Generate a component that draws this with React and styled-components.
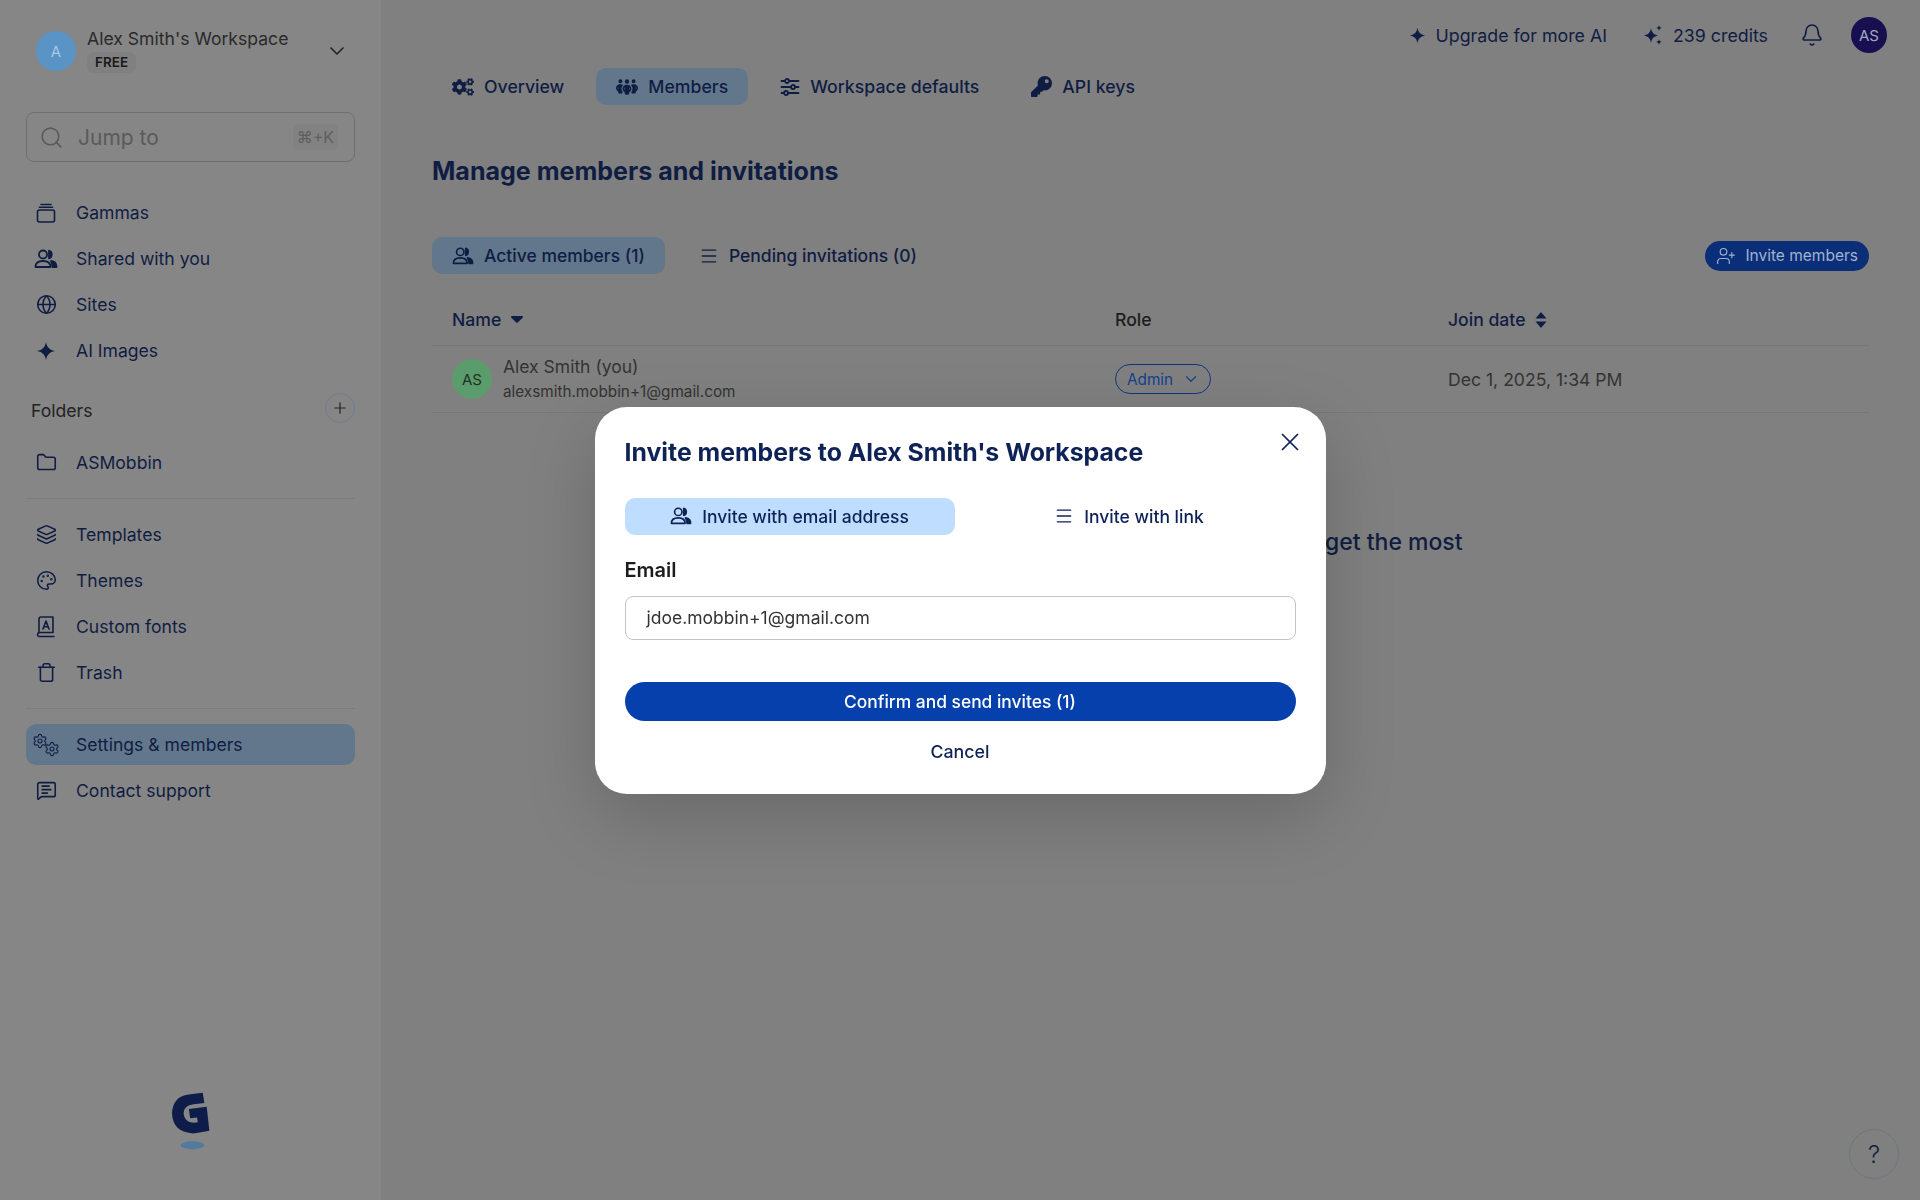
import React from 'react';
import styled, { createGlobalStyle, css } from 'styled-components';
import {
  ChevronDown, Search, Globe, Folder, Plus, Bell, X, Trash, Palette,
  MessageSquareText, Layers, Settings, Menu, UserPlus,
} from 'lucide-react';
import { FaCogs, FaKey } from 'react-icons/fa';
import { FaPeopleGroup } from 'react-icons/fa6';

const navy = '#101d42';
const navyModal = '#0e2257';
const FONT = `Inter, "Noto Sans", sans-serif`;

const GlobalStyle = createGlobalStyle`
  html, body { margin: 0; padding: 0; background: #808080; }
  body { font-family: ${FONT}; color: ${navy}; }
  * { box-sizing: border-box; }
`;

const Page = styled.div`
  display: grid;
  grid-template-columns: 381px 1fr;
  height: 1200px;
  overflow: hidden;
`;

/* sidebar */
const Sidebar = styled.aside`
  display: flex;
  flex-direction: column;
  background: #868686;
  padding: 31px 26px 0;
  height: 1200px;
`;

const WorkspaceHead = styled.div`
  display: flex;
  align-items: center;
  padding: 0 6px 0 10px;
  height: 40px;
  color: #262626;
`;

const WorkspaceAvatar = styled.div`
  width: 40px;
  height: 40px;
  border-radius: 50%;
  background: #5a93c6;
  color: #a9c8e2;
  font-size: 15px;
  display: flex;
  align-items: center;
  justify-content: center;
  flex: none;
`;

const WorkspaceText = styled.div`
  flex: 1;
  margin-left: 11px;
  display: flex;
  flex-direction: column;
  align-items: flex-start;
`;

const WorkspaceName = styled.div`
  font-size: 17.6px;
  line-height: 24px;
  margin-top: -3px;
  color: #2a2a2a;
`;

const PlanTag = styled.span`
  font-size: 13.5px;
  font-weight: 600;
  line-height: 21px;
  margin-top: 1px;
  padding: 0 8px;
  border-radius: 7px;
  background: #808080;
  color: #1a1a1a;
`;

const SearchBox = styled.div`
  display: flex;
  align-items: center;
  height: 50px;
  margin-top: 41px;
  padding: 0 16px 0 12px;
  border: 1.5px solid #6f6f6f;
  border-radius: 8px;
  color: #5a5a5a;
`;

const SearchLabel = styled.span`
  flex: 1;
  margin-left: 14px;
  font-size: 21px;
`;

const Shortcut = styled.span`
  font-size: 16px;
  padding: 3px 4px;
  border-radius: 5px;
  background: #828282;
  color: #5f5f5f;
`;

const NavList = styled.nav`
  display: flex;
  flex-direction: column;
  gap: 5px;
  margin-top: ${p => p.$top || 0}px;
`;

const NavItem = styled.div`
  display: flex;
  align-items: center;
  gap: 18px;
  height: 41px;
  padding-left: 8px;
  border-radius: 10px;
  font-size: 17.6px;
  color: ${navy};
  ${p => p.$active && css`
    background: #62778c;
  `}
`;

const IconBox = styled.span`
  display: flex;
  align-items: center;
  justify-content: center;
  width: 24px;
  height: 24px;
  flex: none;
`;

const FolderHead = styled.div`
  display: flex;
  align-items: center;
  justify-content: space-between;
  height: 30px;
  margin-top: 24px;
  padding-left: 5px;
  font-size: 17.6px;
  color: #222;
`;

const RoundButton = styled.div`
  width: 30px;
  height: 30px;
  border-radius: 50%;
  border: 1px solid #737a8c;
  display: flex;
  align-items: center;
  justify-content: center;
  margin-top: -5px;
`;

const Divider = styled.hr`
  border: 0;
  border-top: 1px solid #7d7d7d;
  margin: 15px 0 15px;
`;

const LogoWrap = styled.div`
  margin-top: auto;
  padding-bottom: 50px;
  display: flex;
  justify-content: center;
`;

/* main */
const Main = styled.main`
  padding: 17px 51px 0;
  display: flex;
  flex-direction: column;
  background: #808080;
`;

const TopBar = styled.div`
  display: flex;
  justify-content: flex-end;
  align-items: center;
  gap: 36px;
  height: 36px;
  margin-right: -18px;
  font-size: 17.8px;
  color: ${navy};
`;

const TopItem = styled.div`
  display: flex;
  align-items: center;
  gap: 10px;
`;

const BellWrap = styled.span`
  display: flex;
  margin-left: -4px;
`;

const UserAvatar = styled.div`
  width: 36px;
  height: 36px;
  border-radius: 50%;
  background: #170f50;
  color: #a8a5c0;
  font-size: 15px;
  margin-left: -9px;
  display: flex;
  align-items: center;
  justify-content: center;
`;

const TabRow = styled.div`
  display: flex;
  align-items: center;
  gap: ${p => p.$gap || 12}px;
  margin-top: ${p => p.$top}px;
`;

const TabPill = styled.div`
  display: flex;
  align-items: center;
  gap: 10px;
  height: 37px;
  padding: 0 20px;
  border-radius: 10px;
  font-size: ${p => p.$size || 17.7}px;
  font-weight: 500;
  color: ${navy};
  background: ${p => (p.$active ? '#62778c' : 'transparent')};
`;

const PageTitle = styled.h1`
  margin: 50px 0 0;
  font-size: 25.05px;
  line-height: 32px;
  font-weight: 650;
  color: ${navy};
`;

const InviteButton = styled.div`
  margin-left: auto;
  display: flex;
  align-items: center;
  gap: 9px;
  height: 30px;
  padding: 0 11px;
  border-radius: 15px;
  background: #0a2f78;
  color: #a3b2d0;
  font-size: 15.5px;
`;

const TableGrid = styled.div`
  display: grid;
  grid-template-columns: 683px 333px 1fr;
  align-items: center;
  height: ${p => p.$height}px;
  margin-top: ${p => p.$top || 0}px;
  border-bottom: 1px solid #777;
`;

const HeadCell = styled.div`
  display: flex;
  align-items: center;
  gap: 10px;
  font-size: 17.6px;
  font-weight: 500;
  color: ${p => (p.$plain ? '#1d1d1d' : navy)};
  ${p => p.$first && css`padding-left: 20px;`}
`;

const MemberCell = styled.div`
  display: flex;
  align-items: center;
  gap: 11px;
  padding-left: 20px;
`;

const MemberAvatar = styled.div`
  width: 40px;
  height: 40px;
  border-radius: 50%;
  background: #5a9c6c;
  color: #1d3324;
  font-size: 15px;
  display: flex;
  align-items: center;
  justify-content: center;
`;

const MemberName = styled.div`
  font-size: 17.5px;
  line-height: 24px;
  color: #333;
`;

const MemberMail = styled.div`
  font-size: 15.3px;
  line-height: 24px;
  margin-top: 1px;
  color: #333;
`;

const RoleBadge = styled.div`
  display: inline-flex;
  align-items: center;
  gap: 9px;
  height: 30px;
  padding: 0 10px 0 11px;
  border: 1.5px solid #10357e;
  border-radius: 15px;
  color: #14408f;
  font-size: 15.3px;
  justify-self: start;
`;

const DateCell = styled.div`
  font-size: 17.6px;
  margin-top: 1px;
  color: #333;
`;

const BehindText = styled.div`
  margin: 114px 0 0 893px;
  font-size: 23px;
  line-height: 30px;
  font-weight: 500;
  color: ${navy};
`;

const HelpButton = styled.div`
  position: absolute;
  right: 21px;
  bottom: 21px;
  width: 50px;
  height: 50px;
  border-radius: 50%;
  border: 1px solid #6e7482;
  display: flex;
  align-items: center;
  justify-content: center;
  font-size: 24px;
  font-weight: 300;
  color: ${navy};
`;

/* modal */
const Scrim = styled.div`
  position: fixed;
  inset: 0;
  display: flex;
  align-items: center;
  justify-content: center;
`;

const Modal = styled.div`
  position: relative;
  width: 731px;
  height: 387px;
  padding: 30px;
  border-radius: 32px;
  background: #fff;
  box-shadow: 0 24px 70px rgba(0, 0, 0, 0.18);
  display: flex;
  flex-direction: column;
`;

const CloseButton = styled.div`
  position: absolute;
  top: 20px;
  right: 21px;
  color: ${navyModal};
  display: flex;
`;

const ModalTitle = styled.h2`
  margin: -1px 0 0;
  font-size: 24.8px;
  line-height: 32px;
  font-weight: 650;
  color: ${navyModal};
`;

const ModalTabs = styled.div`
  display: grid;
  grid-template-columns: 330px 1fr;
  gap: 8px;
  margin-top: 30px;
`;

const ModalTab = styled.div`
  display: flex;
  align-items: center;
  justify-content: center;
  gap: 10px;
  height: 37px;
  border-radius: 10px;
  font-size: 17.5px;
  font-weight: 500;
  color: ${navyModal};
  background: ${p => (p.$active ? '#bfdeff' : 'transparent')};
`;

const FieldLabel = styled.label`
  margin-top: 22px;
  font-size: 20px;
  line-height: 26px;
  font-weight: 600;
  color: #1c1c1c;
`;

const EmailInput = styled.div`
  margin-top: 13px;
  height: 46px;
  padding: 0 21px 1px;
  display: flex;
  align-items: center;
  border: 1px solid #c4c4c4;
  border-radius: 8px;
  font-size: 17.5px;
  color: #333;
`;

const ConfirmButton = styled.div`
  margin-top: 42px;
  height: 40px;
  border-radius: 20px;
  background: #0540ad;
  color: #fff;
  font-size: 17.4px;
  font-weight: 500;
  display: flex;
  align-items: center;
  justify-content: center;
`;

const CancelLink = styled.div`
  margin-top: 19px;
  font-size: 17.8px;
  line-height: 24px;
  font-weight: 500;
  text-align: center;
  color: ${navyModal};
`;

const GearPair = styled.span`
  position: relative;
  display: block;
  width: 24px;
  height: 24px;
`;

const SmallGear = styled(Settings)`
  position: absolute;
  ${p => (p.$second ? 'right: -2px; bottom: 0;' : 'left: -2px; top: 0;')}
`;

/* drawn icons */
const stroke = { fill: 'none', stroke: 'currentColor', strokeWidth: 2, strokeLinecap: 'round', strokeLinejoin: 'round' };

const GammasIcon = () => (
  <svg width="20" height="20" viewBox="0 0 20 20" {...stroke} strokeWidth="1.6">
    <rect x="1.5" y="7" width="17" height="12" rx="2" />
    <path d="M3.5 4.2h13M5 1.500h10" />
  </svg>
);

const SharedIcon = ({ size = 24 }) => (
  <svg width={size} height={size} viewBox="0 0 24 24" {...stroke} strokeWidth="1.8">
    <circle cx="9" cy="7.500" r="4" />
    <path d="M1.500 20c0-4 3-6 7.500-6s7.500 2 7.500 6z" />
    <path d="M15 3.700a4 4 0 0 1 0 7.600z" fill="currentColor" />
    <path d="M17 14c3.500.4 5.500 2.500 5.500 6h-4c0-2.200-.5-4-1.500-6z" fill="currentColor" />
  </svg>
);

const StarIcon = ({ size = 20 }) => (
  <svg width={size} height={size} viewBox="0 0 20 20" fill="currentColor">
    <path d="M10 1c.9 5.200 3.400 8 9 9-5.600 1-8.100 3.800-9 9-.9-5.200-3.400-8-9-9 5.600-1 8.100-3.800 9-9z" />
  </svg>
);

const CreditsIcon = () => (
  <svg width="20" height="20" viewBox="0 0 20 20" fill="currentColor">
    <path d="M8 3c.7 4.500 2.600 6.600 7 7.500-4.400.9-6.300 3-7 7.500-.7-4.500-2.600-6.600-7-7.500 4.400-.9 6.300-3 7-7.500z" />
    <path d="M16 0c.3 1.800 1.100 2.600 2.800 2.900-1.700.3-2.500 1.100-2.800 2.900-.3-1.800-1.100-2.600-2.800-2.900 1.700-.3 2.500-1.100 2.800-2.900zM16 14c.3 1.800 1.100 2.600 2.800 2.900-1.700.3-2.500 1.100-2.800 2.900-.3-1.800-1.100-2.600-2.800-2.900 1.700-.3 2.500-1.100 2.800-2.900z" />
  </svg>
);

const BookIcon = () => (
  <svg width="20" height="22" viewBox="0 0 20 22" {...stroke} strokeWidth="1.6">
    <path d="M3 17V3a2 2 0 0 1 2-2h12v15.500H4.500A2 2 0 0 0 3 20.500h15" />
    <path d="M7 13l3-8 3 8M8 10.800h4" />
  </svg>
);

const SlidersIcon = () => (
  <svg width="20" height="20" viewBox="0 0 20 20" {...stroke} strokeWidth="1.8">
    <path d="M1.500 4h3.500M9 4h9.500M1.500 10h9.500M15 10h3.500M1.500 16h2.500M8 16h10.500" />
    <circle cx="7" cy="4" r="2" />
    <circle cx="13" cy="10" r="2" />
    <circle cx="6" cy="16" r="2" />
  </svg>
);

const GearsIcon = () => (
  <GearPair>
    <SmallGear size={16} strokeWidth={1.6} />
    <SmallGear size={16} strokeWidth={1.6} $second />
  </GearPair>
);

const SortDown = () => (
  <svg width="12" height="7" viewBox="0 0 12 7" fill="currentColor"><path d="M1 0h10a1 1 0 0 1 .7 1.700L6.700 6.600a1 1 0 0 1-1.400 0L.3 1.700A1 1 0 0 1 1 0z" /></svg>
);

const SortBoth = () => (
  <svg width="12" height="16" viewBox="0 0 12 16" fill="currentColor">
    <path d="M6 0l5.500 6.500H.5zM6 16L.5 9.500h11z" />
  </svg>
);

const GammaLogo = () => (
  <svg width="38" height="58" viewBox="125 95 115 175">
    <path fill="#0d1c48" d="M218 97L223 128 190 132Q160 136 160 160 162 186 190 188L203 186 201 172 180 174 176 146 230 139 238 212 190 220Q128 218 125 160 127 108 175 102Z" />
    <ellipse cx="187" cy="256" rx="36" ry="12" fill="#54799f" />
  </svg>
);

const mainNav = [
  ['Gammas', <GammasIcon />],
  ['Shared with you', <SharedIcon />],
  ['Sites', <Globe size={21} strokeWidth={1.8} />],
  ['AI Images', <StarIcon />],
];

const toolNav = [
  ['Templates', <Layers size={21} strokeWidth={1.8} />],
  ['Themes', <Palette size={21} strokeWidth={1.8} />],
  ['Custom fonts', <BookIcon />],
  ['Trash', <Trash size={21} strokeWidth={1.8} />],
];

function NavGroup({ items, top }) {
  return (
    <NavList $top={top}>
      {items.map(([label, icon, active]) => (
        <NavItem key={label} $active={active}>
          <IconBox>{icon}</IconBox>
          {label}
        </NavItem>
      ))}
    </NavList>
  );
}

export default function App() {
  return (
    <>
      <GlobalStyle />
      <Page>
        <Sidebar>
          <WorkspaceHead>
            <WorkspaceAvatar>A</WorkspaceAvatar>
            <WorkspaceText>
              <WorkspaceName>Alex Smith's Workspace</WorkspaceName>
              <PlanTag>FREE</PlanTag>
            </WorkspaceText>
            <ChevronDown size={24} strokeWidth={1.7} />
          </WorkspaceHead>
          <SearchBox>
            <Search size={25} strokeWidth={1.5} />
            <SearchLabel>Jump to</SearchLabel>
            <Shortcut>⌘+K</Shortcut>
          </SearchBox>
          <NavGroup items={mainNav} top={30} />
          <FolderHead>
            Folders
            <RoundButton><Plus size={18} strokeWidth={1.6} /></RoundButton>
          </FolderHead>
          <NavGroup items={[['ASMobbin', <Folder size={21} strokeWidth={1.8} />]]} top={17} />
          <Divider />
          <NavGroup items={toolNav} />
          <Divider />
          <NavGroup items={[
            ['Settings & members', <GearsIcon />, true],
            ['Contact support', <MessageSquareText size={21} strokeWidth={1.8} />],
          ]} />
          <LogoWrap><GammaLogo /></LogoWrap>
        </Sidebar>
        <Main>
          <TopBar>
            <TopItem><StarIcon size={17} />Upgrade for more AI</TopItem>
            <TopItem><CreditsIcon />239 credits</TopItem>
            <BellWrap><Bell size={24} strokeWidth={1.6} /></BellWrap>
            <UserAvatar>AS</UserAvatar>
          </TopBar>
          <TabRow $top={15}>
            <TabPill><FaCogs size={22} />Overview</TabPill>
            <TabPill $active><FaPeopleGroup size={22} />Members</TabPill>
            <TabPill><SlidersIcon />Workspace defaults</TabPill>
            <TabPill><FaKey size={21} />API keys</TabPill>
          </TabRow>
          <PageTitle>Manage members and invitations</PageTitle>
          <TabRow $top={50} $gap={14}>
            <TabPill $active $size={17.5}><SharedIcon size={22} />Active members (1)</TabPill>
            <TabPill $size={17.5}><Menu size={20} strokeWidth={1.6} />Pending invitations (0)</TabPill>
            <InviteButton><UserPlus size={20} strokeWidth={1.4} />Invite members</InviteButton>
          </TabRow>
          <TableGrid $height={52} $top={20}>
            <HeadCell $first>Name <SortDown /></HeadCell>
            <HeadCell $plain>Role</HeadCell>
            <HeadCell>Join date <SortBoth /></HeadCell>
          </TableGrid>
          <TableGrid $height={67}>
            <MemberCell>
              <MemberAvatar>AS</MemberAvatar>
              <div>
                <MemberName>Alex Smith (you)</MemberName>
                <MemberMail>alexsmith.mobbin+1@gmail.com</MemberMail>
              </div>
            </MemberCell>
            <RoleBadge>Admin <ChevronDown size={18} strokeWidth={1.6} /></RoleBadge>
            <DateCell>Dec 1, 2025, 1:34 PM</DateCell>
          </TableGrid>
          <BehindText>get the most</BehindText>
        </Main>
      </Page>
      <HelpButton>?</HelpButton>
      <Scrim>
        <Modal>
          <CloseButton><X size={30} strokeWidth={1.4} /></CloseButton>
          <ModalTitle>Invite members to Alex Smith's Workspace</ModalTitle>
          <ModalTabs>
            <ModalTab $active><SharedIcon size={22} />Invite with email address</ModalTab>
            <ModalTab><Menu size={20} strokeWidth={1.6} />Invite with link</ModalTab>
          </ModalTabs>
          <FieldLabel>Email</FieldLabel>
          <EmailInput>jdoe.mobbin+1@gmail.com</EmailInput>
          <ConfirmButton>Confirm and send invites (1)</ConfirmButton>
          <CancelLink>Cancel</CancelLink>
        </Modal>
      </Scrim>
    </>
  );
}
